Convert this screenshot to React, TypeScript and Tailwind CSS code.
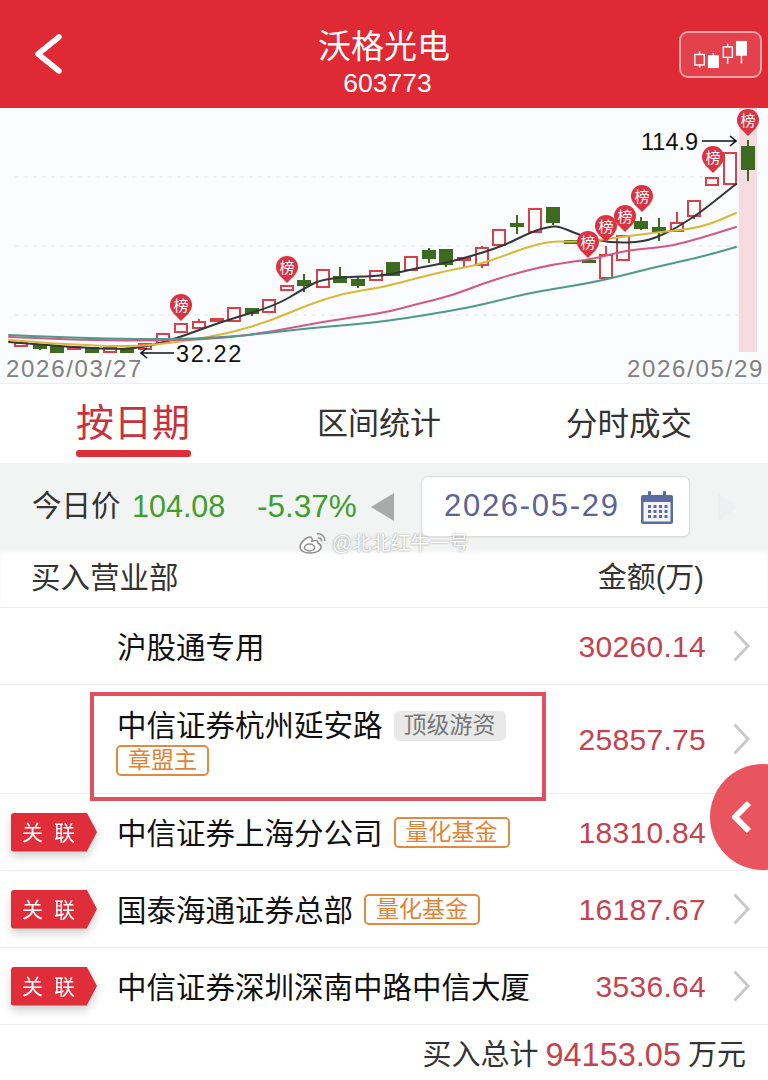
type Candle = { x: number; t: number; b: number; hi?: number; lo?: number; up: boolean }

// chart coordinates are page coordinates (viewBox starts at y=108)
const candles: Candle[] = [
  { x: 21, t: 343, b: 346, up: true },
  { x: 40, t: 345, b: 348, lo: 350, up: false },
  { x: 57, t: 347, b: 352, up: false },
  { x: 74, t: 347, b: 349, up: true },
  { x: 92, t: 348, b: 352, up: false },
  { x: 110, t: 348, b: 352, up: true },
  { x: 127, t: 349, b: 352, up: false },
  { x: 145, t: 344, b: 349, up: true },
  { x: 163, t: 334, b: 343, up: true },
  { x: 181, t: 324, b: 332, up: true },
  { x: 199, t: 322, b: 328, hi: 319, up: true },
  { x: 217, t: 319, b: 321, up: true },
  { x: 234, t: 308, b: 321, up: true },
  { x: 252, t: 309, b: 313, lo: 316, up: false },
  { x: 269, t: 300, b: 312, up: true },
  { x: 287, t: 286, b: 290, up: true },
  { x: 304, t: 281, b: 285, hi: 274, lo: 292, up: false },
  { x: 323, t: 270, b: 287, up: true },
  { x: 340, t: 277, b: 282, hi: 267, up: false },
  { x: 358, t: 280, b: 285, hi: 277, lo: 288, up: false },
  { x: 376, t: 271, b: 280, up: true },
  { x: 393, t: 263, b: 275, up: false },
  { x: 411, t: 257, b: 270, up: true },
  { x: 429, t: 251, b: 258, hi: 248, lo: 263, up: false },
  { x: 446, t: 250, b: 264, lo: 267, up: false },
  { x: 464, t: 258, b: 260, hi: 257, lo: 268, up: true },
  { x: 482, t: 248, b: 265, hi: 246, lo: 268, up: true },
  { x: 499, t: 230, b: 245, up: true },
  { x: 517, t: 224, b: 226, hi: 215, lo: 234, up: false },
  { x: 535, t: 209, b: 232, up: true },
  { x: 553, t: 208, b: 222, lo: 225, up: false },
  { x: 571, t: 241, b: 243, up: false },
  { x: 589, t: 261, b: 262, up: false },
  { x: 606, t: 255, b: 278, hi: 246, up: true },
  { x: 623, t: 236, b: 260, up: true },
  { x: 641, t: 222, b: 228, hi: 217, lo: 230, up: false },
  { x: 659, t: 228, b: 232, hi: 218, lo: 241, up: false },
  { x: 677, t: 223, b: 231, hi: 212, up: true },
  { x: 694, t: 201, b: 216, lo: 219, up: true },
  { x: 712, t: 178, b: 185, up: true },
  { x: 730, t: 153, b: 184, up: true },
  { x: 748, t: 147, b: 169, hi: 140, lo: 181, up: false },
]

const maLines: { color: string; pts: number[][] }[] = [
  {
    color: '#33363a',
    pts: [[9, 342], [70, 347], [130, 350], [170, 341], [220, 322], [275, 306], [305, 288], [320, 280], [345, 277], [384, 276], [417, 268], [451, 262], [501, 247], [531, 232], [551, 226], [561, 227], [584, 237], [611, 243], [644, 242], [667, 233], [684, 223], [701, 212], [736, 184]],
  },
  {
    color: '#d9b93a',
    pts: [[9, 340], [60, 344], [130, 347], [180, 342], [230, 333], [270, 321], [310, 304], [345, 293], [384, 287], [417, 278], [451, 270], [477, 265], [501, 257], [524, 248], [551, 241], [574, 242], [601, 240], [650, 233], [701, 228], [736, 213]],
  },
  {
    color: '#cf5a85',
    pts: [[9, 337], [100, 341], [200, 340], [260, 334], [320, 322], [384, 313], [417, 304], [451, 296], [484, 283], [517, 273], [554, 264], [594, 259], [627, 250], [667, 247], [701, 238], [736, 227]],
  },
  {
    color: '#4c9a8a',
    pts: [[9, 335], [100, 339], [200, 339], [260, 334], [310, 328], [384, 322], [467, 308], [501, 300], [534, 292], [597, 282], [651, 268], [701, 257], [736, 247]],
  },
]

const pins = [
  [181, 305],
  [287, 267],
  [588, 242],
  [606, 226],
  [625, 216],
  [642, 196],
  [713, 157],
  [748, 120],
]

function smooth(pts: number[][]) {
  let d = `M${pts[0][0]} ${pts[0][1]}`
  for (let i = 1; i < pts.length - 1; i++) {
    const mx = (pts[i][0] + pts[i + 1][0]) / 2
    const my = (pts[i][1] + pts[i + 1][1]) / 2
    d += ` Q${pts[i][0]} ${pts[i][1]} ${mx} ${my}`
  }
  const last = pts[pts.length - 1]
  return d + ` L${last[0]} ${last[1]}`
}

function KChart() {
  return (
    <svg viewBox="0 108 768 276" className="block w-[768px] h-[276px]">
      <rect x="739" y="108" width="18" height="244" fill="#f6dbe1" />
      {[177, 246, 315].map((y) => (
        <line key={y} x1="15" x2="752" y1={y} y2={y} stroke="#e3e5e8" strokeWidth="1" strokeDasharray="4 5" />
      ))}
      {candles.map((c, i) => {
        const stroke = c.up ? '#d8404a' : '#3c6a1e'
        return (
          <g key={i}>
            {c.hi !== undefined && <line x1={c.x} x2={c.x} y1={c.hi} y2={c.t} stroke={stroke} strokeWidth="2" />}
            {c.lo !== undefined && <line x1={c.x} x2={c.x} y1={c.b} y2={c.lo} stroke={stroke} strokeWidth="2" />}
            <rect
              x={c.x - 6}
              y={c.t}
              width="12"
              height={c.b - c.t}
              fill={c.up ? '#fdfdfe' : '#3c6a1e'}
              stroke={stroke}
              strokeWidth="2"
            />
          </g>
        )
      })}
      {maLines.map((l) => (
        <path key={l.color} d={smooth(l.pts)} fill="none" stroke={l.color} strokeWidth="2" strokeLinecap="round" />
      ))}
      <path d="M174 353H141M147 348l-6 5 6 5" fill="none" stroke="#111" strokeWidth="1.6" />
      <path d="M702 141H736M730 136l6 5-6 5" fill="none" stroke="#111" strokeWidth="1.6" />
      {pins.map(([x, y]) => (
        <g key={`${x}-${y}`}>
          <path d={`M${x - 8} ${y + 8}L${x} ${y + 16}L${x + 8} ${y + 8}Z`} fill="#dc3342" />
          <circle cx={x} cy={y} r="11" fill="#dc3342" />
          <text
            x={x}
            y={y + 5.5}
            textAnchor="middle"
            fontSize="15"
            fill="#fff"
            fontFamily="'Noto Sans CJK SC', sans-serif"
          >
            榜
          </text>
        </g>
      ))}
    </svg>
  )
}

function Tag({ label, gray }: { label: string; gray?: boolean }) {
  return gray ? (
    <span className="flex h-[30px] w-[112px] items-center justify-center rounded-[5px] bg-[#e9e9e9] text-[23px] text-[#777777]">
      {label}
    </span>
  ) : (
    <span className="flex h-[31px] items-center justify-center rounded-[5px] border-2 border-[#e08b42] px-[10px] text-[23px] text-[#dd8437]">
      {label}
    </span>
  )
}

function Badge() {
  return (
    <div className="drop-shadow-[0_5px_4px_rgba(0,0,0,0.18)]">
      <div className="flex h-[39px] w-[86px] items-center pl-[11px] pr-[9px] bg-[#e02d3a] text-[21px] leading-none text-white gap-[11px] rounded-l-[3px] [clip-path:polygon(0_0,88%_0,100%_50%,88%_100%,0_100%)]">
        <span>关</span>
        <span>联</span>
      </div>
    </div>
  )
}

function Row({
  name,
  value,
  tag,
  linked,
  tall,
}: {
  name: string
  value: string
  tag?: string
  linked?: boolean
  tall?: boolean
}) {
  return (
    <div className={`flex items-center border-b border-[#ededed] ${tall ? 'h-[109px]' : 'h-[77px]'}`}>
      <div className="w-[117px] shrink-0 pl-[11px]">{linked && <Badge />}</div>
      {tall ? (
        <div className="flex-1 flex flex-col items-start gap-[2px] pt-[6px] -ml-px">
          <div className="flex items-center gap-[11px] pl-px">
            <span className="text-[29.5px] leading-[34px] text-[#111111]">{name}</span>
            <Tag label="顶级游资" gray />
          </div>
          <Tag label="章盟主" />
        </div>
      ) : (
        <div className="flex-1 flex items-center gap-[11px]">
          <span className="pt-[3px] text-[29.5px] leading-[34px] text-[#111111]">{name}</span>
          {tag && <Tag label={tag} />}
        </div>
      )}
      <span className="text-[30px] tracking-[0.3px] text-[#c4434e]">{value}</span>
      <svg viewBox="0 0 17 32" className="ml-[27px] mr-[18px] h-[32px] w-[17px]" fill="none" stroke="#c9c9c9" strokeWidth="3">
        <path d="M1.500 1.500L15 16L1.500 30.500" />
      </svg>
    </div>
  )
}

export default function App() {
  return (
    <div className="relative w-[768px] h-[1080px] overflow-hidden bg-white font-['Liberation_Sans','Noto_Sans_CJK_SC',sans-serif]">
      <header className="relative flex h-[108px] items-center justify-between bg-[#df2935] pl-[34px] pr-[6px] text-white">
        <svg viewBox="0 0 28 40" className="h-[40px] w-[28px]" fill="none" stroke="#fff" strokeWidth="5.500" strokeLinecap="round" strokeLinejoin="round">
          <path d="M25 3L4 20L25 37" />
        </svg>
        <div className="absolute inset-x-0 top-[27px] flex flex-col items-center">
          <span className="text-[33px] leading-[40px]">沃格光电</span>
          <span className="pl-[7px] text-[26.5px] leading-[32px]">603773</span>
        </div>
        <div className="flex h-[47px] w-[83px] items-center justify-center rounded-[9px] border-2 border-[#f0a3a8] bg-[#e3414c]">
          <svg viewBox="0 0 83 47" className="h-[47px] w-[83px]" fill="none" stroke="#fff" strokeWidth="1.5">
            <rect x="14.5" y="23.5" width="10" height="11" />
            <path d="M19.5 20v3.5M19.5 34.5v3" />
            <rect x="29" y="25" width="10" height="12" fill="#fff" />
            <path d="M34 22v3" />
            <rect x="44.5" y="15.5" width="9.5" height="11" />
            <path d="M49 12v3.5M49 26.500v7" />
            <rect x="58.500" y="10" width="10" height="14" fill="#fff" />
            <path d="M63.500 24v9" />
          </svg>
        </div>
      </header>

      <section className="relative h-[276px] bg-[#fbfcfd] border-b border-[#eeeeee]">
        <KChart />
        <span className="absolute left-[176px] top-[232px] text-[23.5px] leading-[28px] tracking-[1.6px] text-[#111111]">32.22</span>
        <span className="absolute left-[641px] top-[20px] text-[23.5px] leading-[28px] text-[#111111]">114.9</span>
        <div className="absolute inset-x-0 top-[246px] flex justify-between px-[6px] text-[24px] leading-[30px] tracking-[1.7px] text-[#808080]">
          <span>2026/03/27</span>
          <span className="-mr-[2px]">2026/05/29</span>
        </div>
      </section>

      <nav className="relative flex h-[79px] bg-white text-[#333333]">
        <div className="relative ml-[76px] w-[115px] pt-[14px]">
          <span className="text-[38px] leading-[50px] text-[#c9323c]">按日期</span>
          <div className="absolute bottom-[6px] left-0 h-[7px] w-[115px] rounded-[3px] bg-[#dc2f3c]" />
        </div>
        <span className="ml-[126px] pt-[20px] text-[31px] leading-[40px]">区间统计</span>
        <span className="ml-[125px] pt-[20px] text-[31.5px] leading-[40px]">分时成交</span>
      </nav>

      <div className="flex h-[87px] items-center bg-[#f2f3f3] pl-[32px]">
        <span className="w-[100px] text-[29.5px] text-[#333333]">今日价</span>
        <span className="w-[125px] text-[30.5px] text-[#3f9e2e]">104.08</span>
        <span className="w-[114px] text-[31.5px] text-[#3f9e2e]">-5.37%</span>
        <div className="h-0 w-0 border-y-[14px] border-r-[23px] border-y-transparent border-r-[#aaaaaa]" />
        <div className="ml-[27px] flex h-[61px] w-[269px] items-center rounded-[7px] border border-[#dddddd] bg-white pl-[22px] shadow-[0_1px_2px_rgba(0,0,0,0.08)]">
          <span className="w-[175px] text-[31px] tracking-[1.7px] text-[#5d6491] whitespace-nowrap">2026-05-29</span>
          <svg viewBox="0 0 34 34" className="ml-[21px] h-[34px] w-[34px]">
            <path d="M3 5h28a2 2 0 0 1 2 2v25a2 2 0 0 1-2 2H3a2 2 0 0 1-2-2V7a2 2 0 0 1 2-2Z" fill="#5c6ba0" />
            <rect x="3.5" y="12" width="27" height="19.5" fill="#f3f4f8" />
            <rect x="8" y="1" width="3" height="8" rx="1" fill="#5c6ba0" />
            <rect x="23" y="1" width="3" height="8" rx="1" fill="#5c6ba0" />
            {[15, 20, 25].map((y) =>
              [8, 13.5, 19, 24.5].map((x) => <rect key={`${x}${y}`} x={x} y={y} width="3" height="3" fill="#5c6ba0" />),
            )}
          </svg>
        </div>
        <div className="ml-[28px] h-0 w-0 border-y-[14px] border-l-[20px] border-y-transparent border-l-[#eeeff0]" />
      </div>

      <div className="flex h-[58px] items-center justify-between border-b border-[#ededed] pl-[31px] pr-[64px] shadow-[inset_0_3px_3px_rgba(0,0,0,0.04)] text-[#333333]">
        <span className="text-[29.5px]">买入营业部</span>
        <span className="text-[29px]">金额(万)</span>
      </div>

      <Row name="沪股通专用" value="30260.14" />
      <Row name="中信证券杭州延安路" value="25857.75" tall />
      <Row name="中信证券上海分公司" value="18310.84" tag="量化基金" linked />
      <Row name="国泰海通证券总部" value="16187.67" tag="量化基金" linked />
      <Row name="中信证券深圳深南中路中信大厦" value="3536.64" linked />

      <div className="flex h-[56px] items-center justify-end gap-[7px] pr-[22px] pt-[5px] text-[29px] text-[#333333]">
        <span>买入总计</span>
        <span className="text-[32.5px] text-[#c4434e]">94153.05</span>
        <span>万元</span>
      </div>

      {/* watermark */}
      <div className="absolute left-[298px] top-[529px] flex items-center gap-[4px] text-[19.5px] text-white [text-shadow:0_0_2px_rgba(90,90,90,0.75)]">
        <svg viewBox="0 0 30 24" className="h-[24px] w-[30px]" fill="none" stroke="#8f8f8f" strokeWidth="1.5">
          <path d="M12 21c-6 0-10-2.500-10-6 0-4 6-10 10-10 2 0 2.500 2 2 4 3-1 6-1 6 2 2 1 3 2 3 4 0 3.500-5 6-11 6Z" fill="#fff" />
          <ellipse cx="11.500" cy="15.500" rx="5" ry="3.500" />
          <path d="M19 2c4-1 8 2 8 7M20 6c2-.5 4 1 3.500 3.500" />
        </svg>
        <span>@北北红牛一号</span>
      </div>

      {/* red annotation box */}
      <div className="absolute left-[90px] top-[692px] h-[109px] w-[456px] border-[4px] border-[#e0505f]" />

      {/* floating pull tab */}
      <div className="absolute left-[710px] top-[764px] flex h-[106px] w-[106px] items-center rounded-full bg-[#e8555f] pl-[20px]">
        <svg viewBox="0 0 22 34" className="h-[34px] w-[22px]" fill="none" stroke="#fff" strokeWidth="6" strokeLinejoin="round">
          <path d="M19 3L5 17L19 31" />
        </svg>
      </div>
    </div>
  )
}
